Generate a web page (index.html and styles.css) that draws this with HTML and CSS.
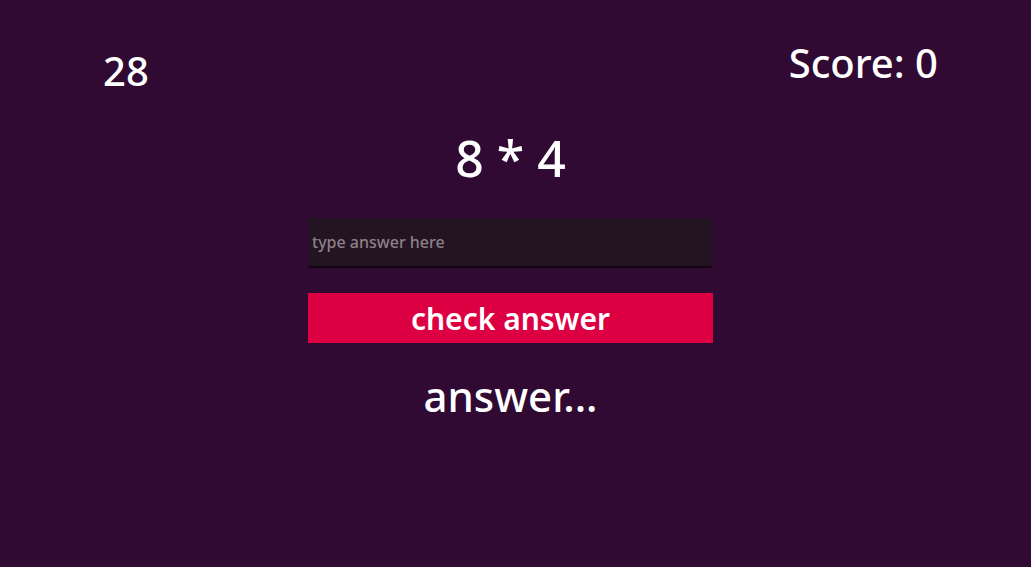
FILE: index.html
```html
<!DOCTYPE html>
<html>
<head>
<meta charset="utf-8">
<link rel="stylesheet" href="styles.css">
</head>
<body>
<div class="app">
  <div class="top">
    <div class="timer">28</div>
    <div class="score">Score: 0</div>
  </div>
  <div class="question">8 * 4</div>
  <div class="form">
    <input class="answer-input" type="text" placeholder="type answer here">
    <button class="check-btn">check answer</button>
  </div>
  <div class="result">answer...</div>
</div>
</body>
</html>
```
FILE: styles.css
```css
html, body {
  margin: 0;
  padding: 0;
  height: 100%;
}
body {
  background: #300a32;
  color: #ffffff;
  font-family: "Noto Sans", "Open Sans", sans-serif;
  font-weight: 500;
}
.app {
  display: flex;
  flex-direction: column;
  align-items: center;
  padding-right: 10px;
}
.top {
  align-self: stretch;
  display: flex;
  justify-content: space-between;
  padding: 0 83px 0 103px;
}
.timer {
  font-size: 40px;
  line-height: 54px;
  margin-top: 44px;
}
.score {
  font-size: 40px;
  line-height: 54px;
  margin-top: 36px;
}
.question {
  font-size: 50px;
  line-height: 64px;
  margin-top: 28px;
}
.form {
  display: flex;
  flex-direction: column;
  width: 405px;
  margin-top: 28px;
}
.answer-input {
  box-sizing: border-box;
  height: 50px;
  border: none;
  border-bottom: 2px solid #140610;
  border-radius: 3px;
  background: #241320;
  color: #ffffff;
  font-family: "Noto Sans", "Open Sans", sans-serif;
  font-weight: 500;
  font-size: 16px;
  padding: 0 4px;
  outline: none;
}
.answer-input::placeholder {
  color: #8d808a;
}
.check-btn {
  margin-top: 25px;
  height: 50px;
  border: none;
  background: #dc0043;
  color: #ffffff;
  font-family: "Noto Sans", "Open Sans", sans-serif;
  font-weight: 600;
  font-size: 30px;
  padding: 0;
}
.result {
  font-size: 42px;
  line-height: 56px;
  margin-top: 25px;
}
```
